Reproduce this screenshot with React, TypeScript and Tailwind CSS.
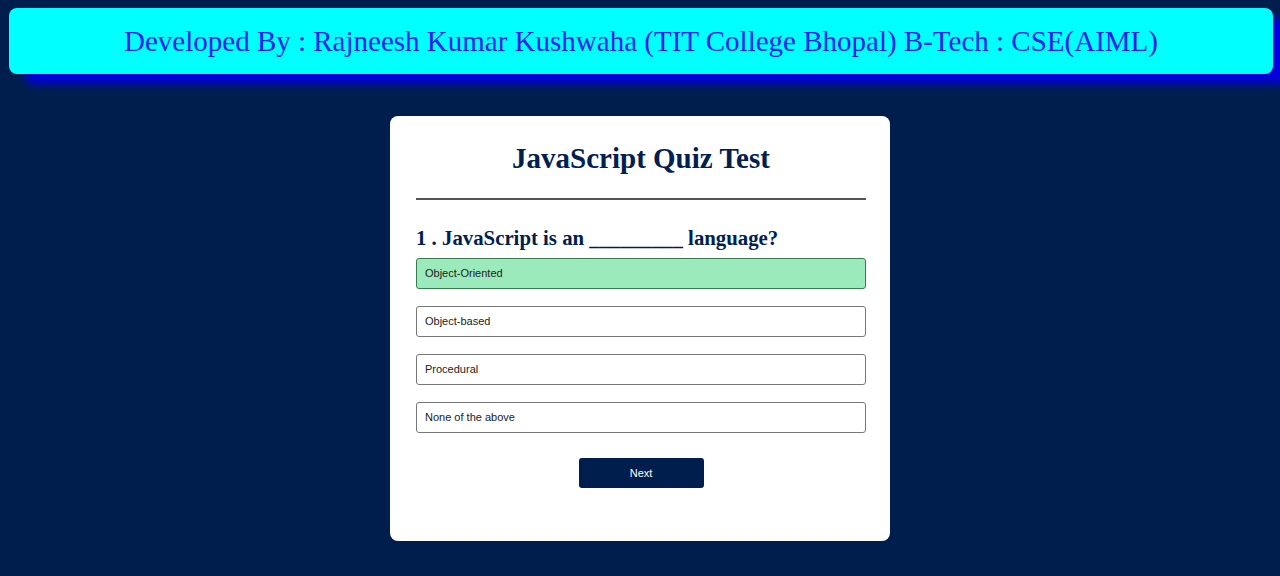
import React, { useState } from "react";

const options = ["Object-Oriented", "Object-based", "Procedural", "None of the above"];

const App: React.FC = () => {
  const [selected] = useState(0);

  return (
    <div className="min-h-[576px] bg-[#001e4d] pt-2 px-[9px] pb-[34px]">
      {/* Header banner */}
      <div className="mr-[-2px] h-[66px] rounded-[8px] bg-[#00ffff] shadow-[16px_10px_8px_#0000dd] flex items-center justify-center">
        <h1 className="text-[29px] leading-none text-[#2020ee] font-['Liberation_Serif',serif] pt-[1px]">
          Developed By : Rajneesh Kumar Kushwaha (TIT College Bhopal) B-Tech : CSE(AIML)
        </h1>
      </div>

      {/* Quiz card */}
      <div className="mx-auto mt-[42px] w-[500px] h-[425px] rounded-[8px] bg-white pl-[26px] pr-[24px] pt-[27px] font-['Liberation_Serif',serif]">
        <h2 className="text-center text-[29px] font-bold leading-[30px] text-[#002050]">
          JavaScript Quiz Test
        </h2>
        <hr className="mt-[25px] border-t-2 border-[#555]" />
        <h3 className="mt-[26px] text-[20.8px] font-bold leading-[24px] text-[#002050]">
          1 . JavaScript is an _________ language?
        </h3>
        <div className="mt-[8px] flex flex-col gap-[17px]">
          {options.map((opt, i) => (
            <div
              key={opt}
              className={`h-[31px] rounded-[3px] border px-2 flex items-center text-[11px] text-[#222] font-['Liberation_Sans',Arial,sans-serif] ${
                i === selected ? "bg-[#9aeabc] border-[#3a7a50]" : "bg-white border-[#777]"
              }`}
            >
              {opt}
            </div>
          ))}
        </div>
        <div className="mt-[25px] flex justify-center">
          <button className="w-[125px] h-[30px] rounded-[3px] bg-[#001e4d] text-white text-[11px] font-['Liberation_Sans',Arial,sans-serif]">
            Next
          </button>
        </div>
      </div>
    </div>
  );
};

export default App;
